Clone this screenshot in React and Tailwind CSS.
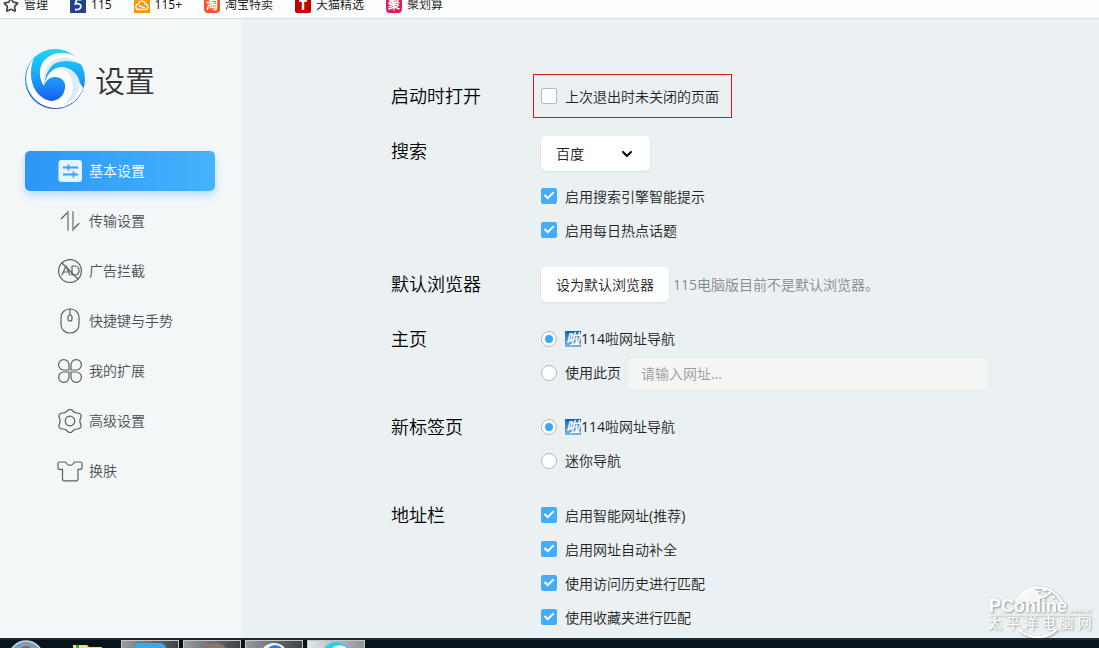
import { ChevronDown, Star } from 'lucide-react'

const BOOKMARKS = [
    { label: '管理', icon: 'star' },
    { label: '115', icon: '115' },
    { label: '115+', icon: 'cloud' },
    { label: '淘宝特卖', icon: 'tao' },
    { label: '天猫精选', icon: 'tmall' },
    { label: '聚划算', icon: 'ju' },
]

const MENU = [
    { label: '基本设置', icon: BasicIcon },
    { label: '传输设置', icon: TransferIcon },
    { label: '广告拦截', icon: AdIcon },
    { label: '快捷键与手势', icon: MouseIcon },
    { label: '我的扩展', icon: CloverIcon },
    { label: '高级设置', icon: GearIcon },
    { label: '换肤', icon: ShirtIcon },
]

const line = { fill: 'none', stroke: '#5c5f61', strokeWidth: 1.2, strokeLinecap: 'round', strokeLinejoin: 'round' }

function BasicIcon() {
    return (
        <svg className="w-6 h-6" viewBox="0 0 24 24">
            <rect x="0.5" y="1" width="23.500" height="22" rx="3" fill="#e3f3ff" />
            <path d="M5 8.500h15M5 15.500h15M10.500 5.500v6M15.500 12.500v6" stroke="#3a9ffa" strokeWidth="1.8" />
        </svg>
    )
}

function TransferIcon() {
    return (
        <svg className="w-6 h-6" viewBox="0 0 24 24" {...line}>
            <path d="M3.500 9.500l6.500-6.500" />
            <path d="M21 14.500l-6.500 6.500" />
            <path d="M10 3v18M15 3v18" stroke="#96999b" strokeWidth="1.800" />
        </svg>
    )
}

function AdIcon() {
    return (
        <svg className="w-6 h-6" viewBox="0 0 24 24" {...line}>
            <circle cx="12" cy="12" r="11.400" />
            <path d="M4 4l16 16" />
            <path d="M4 16l4-9 4 9M5.500 13h5M14 7v9h2.500c6 0 6-9 0-9z" />
        </svg>
    )
}

function MouseIcon() {
    return (
        <svg className="w-6 h-6 overflow-visible" viewBox="0 0 24 24" {...line}>
            <rect x="3" y="0" width="18" height="24" rx="8.500" />
            <path d="M12 0v6" />
            <rect x="10" y="6" width="4" height="6" rx="2" />
        </svg>
    )
}

function CloverIcon() {
    return (
        <svg className="w-6 h-6" viewBox="0 0 24 24" {...line}>
            <path d="M11 11H6a5.200 5.200 0 1 1 5-5.200z" />
            <path d="M13 11h5a5.200 5.200 0 1 0-5-5.200z" />
            <path d="M11 13H6a5.200 5.200 0 1 0 5 5.200z" />
            <path d="M13 13h5a5.200 5.200 0 1 1-5 5.200z" />
        </svg>
    )
}

function GearIcon() {
    return (
        <svg className="w-6 h-6" viewBox="0 0 24 24" {...line}>
            <path d="M10 1.200Q12-.4 14 1.200L15.700 2.800Q17 4 19.500 4Q22 4 23 6Q23.500 7.500 22.300 9.600Q21.500 12 22.300 14.400Q23.500 16.500 23 18Q22 20 19.500 20Q17 20 15.700 21.200L14 22.800Q12 24.400 10 22.800L8.300 21.200Q7 20 4.500 20Q2 20 1 18Q.5 16.500 1.700 14.400Q2.500 12 1.700 9.600Q.5 7.500 1 6Q2 4 4.500 4Q7 4 8.300 2.800z" />
            <circle cx="12" cy="12" r="4.800" />
        </svg>
    )
}

function ShirtIcon() {
    return (
        <svg className="w-6 h-6 overflow-visible" viewBox="0 0 24 24" {...line}>
            <path d="M1.500 3h5q1 0 1.500.8 1.500 2.500 4 2.500t4-2.500q.5-.8 1.500-.8h5q1.500 0 1.500 1.500V9q0 1.300-1.300 1.300H20v9.500q0 2-2 2H6.500q-2 0-2-2v-9.500H1.500Q0 10.300 0 9V4.500Q0 3 1.500 3z" />
        </svg>
    )
}

function Logo() {
    return (
        <svg className="w-15 h-15" viewBox="0 0 60 60">
            <defs>
                <linearGradient id="swirl" x1="0" y1="0" x2="0" y2="1">
                    <stop offset="0" stopColor="#18d8fb" />
                    <stop offset="0.45" stopColor="#1aa5f8" />
                    <stop offset="0.85" stopColor="#1a5ff3" />
                    <stop offset="1" stopColor="#2450cf" />
                </linearGradient>
            </defs>
            <circle cx="30" cy="30" r="30" fill="url(#swirl)" />
            {/* lower swoosh */}
            <path d="M9 9C1 18-1 32 4 42C10 54 21 59 31 59C44 59 54 50 58 39L55 36C54 26 46 18 36 18C27 19 21 26 19 37C21 31 25 28 30 28C37 28 41 33 40 39C39 47 33 52 26 52C14 50 6 38 6 25C6 18 7 13 9 9z" fill="#fff" />
            <path d="M34 19C46 17 55 26 55 37C54 46 47 53 38 56C45 50 50 41 47 32C45 25 41 20 34 19z" fill="#dcebf5" />
            <path d="M55 34C54 46 47 53 38 57C47 55 55 49 58 39z" fill="#fff" />
            {/* upper swoosh */}
            <path d="M19 37C13 28 13 15 23 8C33 1 50 2 57 16C50 9 38 8 30 13C23 18 20 27 19 37z" fill="#fff" />
            <path d="M19 36C17 26 21 15 31 10C40 6 50 10 57 16C47 11 36 11 29 15C22 21 20 28 19 36z" fill="#dcebf5" />
        </svg>
    )
}

function BookmarkIcon({ name }) {
    if (name === 'star') return <Star className="w-4 h-4 text-[#444]" strokeWidth={2.5} />
    if (name === '115') {
        return (
            <svg className="w-4 h-4" viewBox="0 0 16 16">
                <rect width="16" height="16" fill="#21438d" />
                <path d="M11.500 2.500H6.500L5.500 7c3-.8 5.500 0 5.300 2.700-.2 2.500-3 3.300-5.800 2.800" fill="none" stroke="#fff" strokeWidth="1.800" />
            </svg>
        )
    }
    if (name === 'cloud') {
        return (
            <svg className="w-4 h-4" viewBox="0 0 16 16">
                <rect width="16" height="16" fill="#fb9613" />
                <path d="M4.500 12.500a2.700 2.700 0 0 1 0-5.400C5.500 3 11 3.500 11.300 7.100c3.500.1 3.300 5.400 0 5.400zM5 9.500c2-1.500 3.500 2 6 .5" fill="none" stroke="#fff" strokeWidth="1.300" />
            </svg>
        )
    }
    if (name === 'tao') {
        return <span className="w-4 h-4 rounded-sm bg-[#f0562a] text-white text-xs leading-4 text-center font-bold">淘</span>
    }
    if (name === 'tmall') {
        return <span className="w-4 h-4 rounded-xs bg-[#c40000] text-white text-sm leading-4 text-center font-bold">T</span>
    }
    return <span className="w-4 h-4 rounded-sm bg-[#e31b5c] text-white text-xs leading-4 text-center font-bold">聚</span>
}

function Section({ title, className = 'mb-5', children }) {
    return (
        <section className={`flex ${className}`}>
            <h2 className="w-[150px] shrink-0 text-lg leading-[34px] text-black">{title}</h2>
            <div className="flex-1 min-w-0">{children}</div>
        </section>
    )
}

function Check({ label, checked = true }) {
    return (
        <label className="flex items-center gap-2 h-[34px] w-fit">
            <span className="relative flex w-4 h-4">
                <input
                    type="checkbox"
                    defaultChecked={checked}
                    className="peer appearance-none w-4 h-4 rounded-xs border border-[#b5b9bb] bg-white checked:bg-[#43adfb] checked:border-[#43adfb]"
                />
                <svg className="absolute inset-0 w-4 h-4 hidden peer-checked:block pointer-events-none" viewBox="0 0 16 16">
                    <path d="M3.500 7l3.200 3.200 6-6" fill="none" stroke="#fff" strokeWidth="2" />
                </svg>
            </span>
            <span className="pt-0.5">{label}</span>
        </label>
    )
}

function Radio({ name, checked = false, children }) {
    return (
        <label className="flex items-center gap-2 h-[34px] w-fit shrink-0">
            <span className="relative flex w-4 h-4">
                <input
                    type="radio"
                    name={name}
                    defaultChecked={checked}
                    className="peer appearance-none w-4 h-4 rounded-full border border-[#b5b9bb] bg-white"
                />
                <span className="absolute inset-1 rounded-full bg-[#39a9fb] hidden peer-checked:block pointer-events-none" />
            </span>
            <span className="flex items-center">{children}</span>
        </label>
    )
}

function NavSite() {
    return (
        <>
            <span className="w-4 h-4 bg-linear-to-b from-[#0862ad] to-[#7fb5e3] text-white text-sm leading-4 text-center font-bold italic">啦</span>
            114啦网址导航
        </>
    )
}

function Watermark() {
    return (
        <svg className="absolute right-2 bottom-0 w-[104px] h-[54px]" viewBox="0 0 104 54" style={{ filter: 'drop-shadow(1px 1px 1px #8f989b)' }}>
            <path d="M29 18A26 26 0 0 1 76 20M32 45A26 26 0 0 0 70 45" fill="none" stroke="#fff" strokeWidth="2" />
            <path d="M31 15q6-11 20-13l-3 4 5 1-2 3 5 1 6-1-4 4-5 1-3 3H29z" fill="#fff" opacity="0.9" />
            <path d="M56 5h3v2h-3zM61 8h3v2h-3zM65 12h3v2h-3z" fill="#fff" />
            <g fill="#fff" fontFamily="Liberation Sans, Noto Sans CJK SC, sans-serif">
                <text x="2" y="28" fontSize="18" fontWeight="bold">PConline</text>
                <text x="81" y="28" fontSize="6" fontWeight="bold">.com.cn</text>
                <text x="1" y="44" fontSize="14">太 平 洋 电 脑 网</text>
            </g>
            <path d="M2 31h101" stroke="#fff" />
        </svg>
    )
}

function Taskbar() {
    return (
        <footer className="relative flex gap-1 h-[10px] shrink-0 overflow-hidden bg-[#07141b] border-t-2 border-[#1c2a31]">
            <svg className="w-[117px] h-[8px]" viewBox="0 0 117 8">
                <circle cx="26" cy="18" r="17" fill="#7f9fb5" stroke="#c8d8e2" strokeWidth="1.500" />
                <circle cx="26" cy="13" r="7" fill="#a9564a" />
                <path d="M73 8V5h14l2 2h13v1z" fill="#ead98c" />
                <path d="M76 5h3v3h-3z" fill="#23b04a" />
            </svg>
            {['blue', 'photo', 'chrome', 'swirl'].map((app) => (
                <div
                    key={app}
                    className={`w-[58px] h-[8px] bg-linear-to-r border border-b-0 border-[#c2c6c8] ${
                        app === 'swirl' ? 'from-[#e6e9ea] to-[#8d9294]' : 'from-[#9a9d9f] to-[#3c4245]'
                    }`}
                >
                    <svg className="w-full h-[7px]" viewBox="0 0 56 7">
                        {app === 'blue' && <rect x="12" y="2" width="32" height="20" rx="6" fill="#36a9f8" />}
                        {app === 'photo' && <path d="M15 7l4-3 4-2 4 1 6-1 6 2 3 3z" fill="#8a7569" />}
                        {app === 'chrome' && (
                            <>
                                <circle cx="28" cy="16" r="14" fill="#f3f6f8" />
                                <path d="M22 7q7-6 14 0z" fill="#3c78cf" />
                            </>
                        )}
                        {app === 'swirl' && (
                            <>
                                <circle cx="28" cy="15" r="14" fill="#2ccdf5" />
                                <path d="M24 7q6-5 14-1v1z" fill="#fff" />
                            </>
                        )}
                    </svg>
                </div>
            ))}
        </footer>
    )
}

export default function App() {
    return (
        <div className="flex flex-col h-screen overflow-hidden bg-[#ebf1f2] text-sm text-[#222] font-['Open_Sans','Noto_Sans_CJK_SC_DemiLight','Noto_Sans_CJK_SC',sans-serif]">
            <nav className="flex items-end gap-[22px] h-[19px] pl-[3px] shrink-0 overflow-hidden bg-[#fcfdfd] border-b border-[#d9dcdd] text-xs text-[#111]">
                {BOOKMARKS.map((b) => (
                    <a key={b.label} href="#" className="flex items-center gap-[5px] h-[26px] shrink-0">
                        <BookmarkIcon name={b.icon} />
                        {b.label}
                    </a>
                ))}
            </nav>

            <div className="relative flex flex-1 min-h-0">
                <aside className="w-[241px] shrink-0 bg-[#f4f7f8] px-[25px] pt-[30px]">
                    <div className="flex items-center gap-[10px] h-15 mb-[42px]">
                        <Logo />
                        <h1 className="pt-1 text-3xl leading-[60px] text-[#333]">设置</h1>
                    </div>
                    <ul className="flex flex-col gap-[10px]">
                        {MENU.map(({ label, icon: Icon }, i) => (
                            <li key={label}>
                                <a
                                    href="#"
                                    className={`flex items-center gap-[7px] h-10 pl-[33px] mr-[1px] rounded-[5px] ${
                                        i === 0
                                            ? 'text-white bg-linear-to-r from-[#2d96f9] to-[#45b3fc] shadow-[0_4px_8px_rgba(69,175,252,0.35)]'
                                            : 'text-[#4c4f51]'
                                    }`}
                                >
                                    <Icon />
                                    {label}
                                </a>
                            </li>
                        ))}
                    </ul>
                </aside>

                <main className="flex-1 min-w-0 pl-[150px] pr-[110px] pt-[55px]">
                    <Section title="启动时打开" className="mb-4 items-center">
                        <div className="-ml-2 w-[199px] h-11 px-[7px] py-1 border border-[#d01c1c]">
                            <Check label="上次退出时未关闭的页面" checked={false} />
                        </div>
                    </Section>

                    <Section title="搜索">
                        <div className="relative w-[109px] mt-0.5 mb-2">
                            <select aria-label="搜索" className="appearance-none w-full h-[35px] px-[15px] rounded-[5px] bg-white shadow-[0_1px_2px_rgba(0,0,0,0.08)]">
                                <option>百度</option>
                            </select>
                            <ChevronDown className="absolute right-[15px] top-[10px] w-4 h-4 text-black pointer-events-none" strokeWidth={3} />
                        </div>
                        <Check label="启用搜索引擎智能提示" />
                        <Check label="启用每日热点话题" />
                    </Section>

                    <Section title="默认浏览器">
                        <div className="flex items-center gap-1">
                            <button className="h-[35px] px-[15px] rounded-[5px] bg-white shadow-[0_1px_2px_rgba(0,0,0,0.08)]">设为默认浏览器</button>
                            <span className="text-[#868989]">115电脑版目前不是默认浏览器。</span>
                        </div>
                    </Section>

                    <Section title="主页">
                        <Radio name="home" checked><NavSite /></Radio>
                        <div className="flex items-center gap-[6px]">
                            <Radio name="home">使用此页</Radio>
                            <input
                                type="text"
                                aria-label="使用此页"
                                placeholder="请输入网址..."
                                className="flex-1 min-w-0 h-[33px] px-[13px] rounded-[5px] bg-[#f5f5f5] border border-[#e9ebeb] placeholder:text-[#999b9c]"
                            />
                        </div>
                    </Section>

                    <Section title="新标签页">
                        <Radio name="tab" checked><NavSite /></Radio>
                        <Radio name="tab">迷你导航</Radio>
                    </Section>

                    <Section title="地址栏">
                        <Check label="启用智能网址(推荐)" />
                        <Check label="启用网址自动补全" />
                        <Check label="使用访问历史进行匹配" />
                        <Check label="使用收藏夹进行匹配" />
                    </Section>
                </main>

                <Watermark />
            </div>

            <Taskbar />
        </div>
    )
}
